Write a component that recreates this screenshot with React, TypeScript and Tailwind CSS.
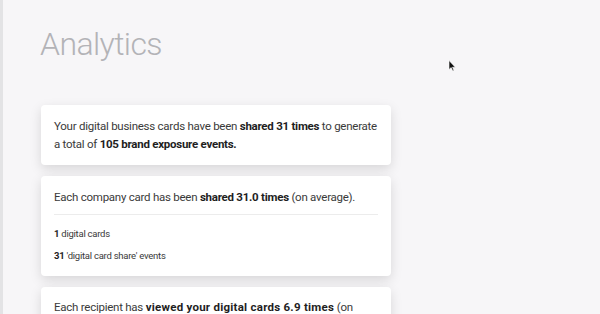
export default function App() {
  const card = "bg-white rounded-[4px] shadow-[0_4px_12px_rgba(0,0,0,0.13)] px-[13px]";
  const strong = "font-bold text-[#1e1e1e]";

  return (
    <div
      className="relative min-h-screen bg-[#f7f6f8] border-l-[3px] border-[#e3e3e5] overflow-hidden"
      style={{ fontFamily: "Roboto, 'Liberation Sans', sans-serif" }}
    >
      <div className="pl-[37px] pt-[25px]">
        <h1 className="text-[32px] leading-[38px] font-light tracking-[-0.6px] text-[#b3b3b7]">Analytics</h1>
      </div>

      <div className="pl-[38px] mt-[42px] w-[388px] flex flex-col gap-[11px] text-[#3a3a3a]">
        <div className={`${card} py-[12px]`}>
          <p className="text-[11.5px] leading-[18px] tracking-[-0.25px]">
            Your digital business cards have been <b className={strong}>shared 31 times</b> to generate a total of{" "}
            <b className={strong}>105 brand exposure events.</b>
          </p>
        </div>

        <div className={`${card} pt-[12px] pb-[13px]`}>
          <p className="text-[11.5px] leading-[18px] tracking-[-0.25px]">
            Each company card has been <b className={strong}>shared 31.0 times</b> (on average).
          </p>
          <div className="h-px bg-[#ececec] mt-[8px] mb-[12px]" />
          <div className="flex flex-col gap-[7.5px] text-[9.5px] leading-[14px] tracking-[-0.25px]">
            <p>
              <b className={strong}>1</b> digital cards
            </p>
            <p>
              <b className={strong}>31</b> 'digital card share' events
            </p>
          </div>
        </div>

        <div className={`${card} pt-[11px] pb-[12px]`}>
          <p className="text-[11.5px] leading-[18px] tracking-[-0.25px]">
            Each recipient has <b className={`${strong} tracking-[0.25px]`}>viewed your digital cards 6.9 times</b> (on average).
          </p>
        </div>
      </div>

      {/* mouse pointer captured in the screenshot */}
      <svg className="absolute left-[445px] top-[60px]" width="8" height="12" viewBox="0 0 8 12">
        <path d="M1 0.5 L1 9.5 L3.2 7.6 L4.8 11 L6 10.4 L4.5 7.2 L7.3 7.2 Z" fill="#111" stroke="#fff" strokeWidth="0.6" />
      </svg>
    </div>
  );
}
